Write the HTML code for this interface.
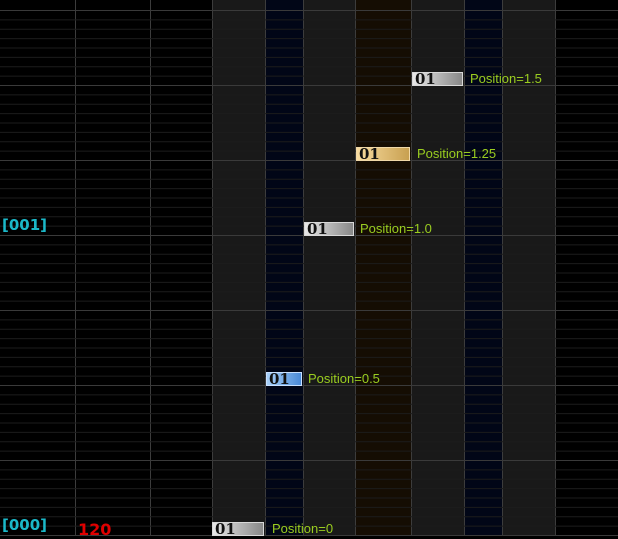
<!DOCTYPE html>
<html><head><style>
body{margin:0;width:618px;height:536px;overflow:hidden;background:#000;position:relative;font-family:"Liberation Sans",sans-serif}
.c{position:absolute;top:0;height:536px}
.v{position:absolute;top:0;height:536px;width:1px;background:#3c3c3c}
.n{position:absolute;height:14px;border:1px solid #d8d8d8;box-sizing:border-box;background:linear-gradient(90deg,#e8e8e8,#888);font:bold 15px "DejaVu Serif",serif;color:#111;line-height:13px;padding-left:2px;overflow:hidden}
.t{position:absolute;color:#9acd20;font-size:13px;line-height:14px}
</style></head><body>
<div class="c" style="left:212px;width:53px;background:#191919"></div>
<div class="c" style="left:265px;width:38px;background:#010617"></div>
<div class="c" style="left:303px;width:52px;background:#191919"></div>
<div class="c" style="left:355px;width:56px;background:#150d03"></div>
<div class="c" style="left:411px;width:53px;background:#191919"></div>
<div class="c" style="left:464px;width:38px;background:#010617"></div>
<div class="c" style="left:502px;width:53px;background:#191919"></div>
<div class="v" style="left:75px"></div><div class="v" style="left:150px"></div><div class="v" style="left:212px"></div><div class="v" style="left:265px"></div><div class="v" style="left:303px"></div><div class="v" style="left:355px"></div><div class="v" style="left:411px"></div><div class="v" style="left:464px"></div><div class="v" style="left:502px"></div><div class="v" style="left:555px"></div>
<svg style="position:absolute;left:0;top:0" width="618" height="536">
<g stroke="#1c1c1c" stroke-width="1">
<line x1="0" x2="618" y1="19.9" y2="19.9"/><line x1="0" x2="618" y1="29.3" y2="29.3"/><line x1="0" x2="618" y1="38.6" y2="38.6"/><line x1="0" x2="618" y1="48" y2="48"/><line x1="0" x2="618" y1="57.4" y2="57.4"/><line x1="0" x2="618" y1="66.8" y2="66.8"/><line x1="0" x2="618" y1="76.1" y2="76.1"/>
<line x1="0" x2="618" y1="94.9" y2="94.9"/><line x1="0" x2="618" y1="104.3" y2="104.3"/><line x1="0" x2="618" y1="113.6" y2="113.6"/><line x1="0" x2="618" y1="123" y2="123"/><line x1="0" x2="618" y1="132.4" y2="132.4"/><line x1="0" x2="618" y1="141.8" y2="141.8"/><line x1="0" x2="618" y1="151.1" y2="151.1"/>
<line x1="0" x2="618" y1="169.9" y2="169.9"/><line x1="0" x2="618" y1="179.3" y2="179.3"/><line x1="0" x2="618" y1="188.6" y2="188.6"/><line x1="0" x2="618" y1="198" y2="198"/><line x1="0" x2="618" y1="207.4" y2="207.4"/><line x1="0" x2="618" y1="216.8" y2="216.8"/><line x1="0" x2="618" y1="226.1" y2="226.1"/>
<line x1="0" x2="618" y1="244.9" y2="244.9"/><line x1="0" x2="618" y1="254.3" y2="254.3"/><line x1="0" x2="618" y1="263.6" y2="263.6"/><line x1="0" x2="618" y1="273" y2="273"/><line x1="0" x2="618" y1="282.4" y2="282.4"/><line x1="0" x2="618" y1="291.8" y2="291.8"/><line x1="0" x2="618" y1="301.1" y2="301.1"/>
<line x1="0" x2="618" y1="319.9" y2="319.9"/><line x1="0" x2="618" y1="329.3" y2="329.3"/><line x1="0" x2="618" y1="338.6" y2="338.6"/><line x1="0" x2="618" y1="348" y2="348"/><line x1="0" x2="618" y1="357.4" y2="357.4"/><line x1="0" x2="618" y1="366.8" y2="366.8"/><line x1="0" x2="618" y1="376.1" y2="376.1"/>
<line x1="0" x2="618" y1="394.9" y2="394.9"/><line x1="0" x2="618" y1="404.3" y2="404.3"/><line x1="0" x2="618" y1="413.6" y2="413.6"/><line x1="0" x2="618" y1="423" y2="423"/><line x1="0" x2="618" y1="432.4" y2="432.4"/><line x1="0" x2="618" y1="441.8" y2="441.8"/><line x1="0" x2="618" y1="451.1" y2="451.1"/>
<line x1="0" x2="618" y1="469.9" y2="469.9"/><line x1="0" x2="618" y1="479.3" y2="479.3"/><line x1="0" x2="618" y1="488.6" y2="488.6"/><line x1="0" x2="618" y1="498" y2="498"/><line x1="0" x2="618" y1="507.4" y2="507.4"/><line x1="0" x2="618" y1="516.8" y2="516.8"/><line x1="0" x2="618" y1="526.1" y2="526.1"/>
</g>
<g stroke="#3a3a3a" stroke-width="1">
<line x1="0" x2="618" y1="10.5" y2="10.5"/><line x1="0" x2="618" y1="85.5" y2="85.5"/><line x1="0" x2="618" y1="160.5" y2="160.5"/><line x1="0" x2="618" y1="235.5" y2="235.5"/><line x1="0" x2="618" y1="310.5" y2="310.5"/><line x1="0" x2="618" y1="385.5" y2="385.5"/><line x1="0" x2="618" y1="460.5" y2="460.5"/><line x1="0" x2="618" y1="535.5" y2="535.5"/>
</g>
</svg>
<div style="position:absolute;left:2px;top:216px;color:#1bb8c8;font-size:15px;font-weight:bold;font-family:'DejaVu Sans',sans-serif">[001]</div>
<div style="position:absolute;left:2px;top:516px;color:#1bb8c8;font-size:15px;font-weight:bold;font-family:'DejaVu Sans',sans-serif">[000]</div>
<div style="position:absolute;left:78px;top:520px;color:#e00000;font-size:16px;font-weight:bold;font-family:'DejaVu Sans',sans-serif">120</div>
<div class="n" style="left:212px;top:522px;width:52px">01</div><div class="t" style="left:272px;top:522px">Position=0</div>
<div class="n" style="left:266px;top:372px;width:36px;background:linear-gradient(90deg,#a8d0f8,#4a8ad8);border-color:#c8e0ff">01</div><div class="t" style="left:308px;top:372px">Position=0.5</div>
<div class="n" style="left:304px;top:222px;width:50px">01</div><div class="t" style="left:360px;top:222px">Position=1.0</div>
<div class="n" style="left:356px;top:147px;width:54px;background:linear-gradient(90deg,#f8dca0,#c8a050);border-color:#f0d8a8">01</div><div class="t" style="left:417px;top:147px">Position=1.25</div>
<div class="n" style="left:412px;top:72px;width:51px">01</div><div class="t" style="left:470px;top:72px">Position=1.5</div>
</body></html>
